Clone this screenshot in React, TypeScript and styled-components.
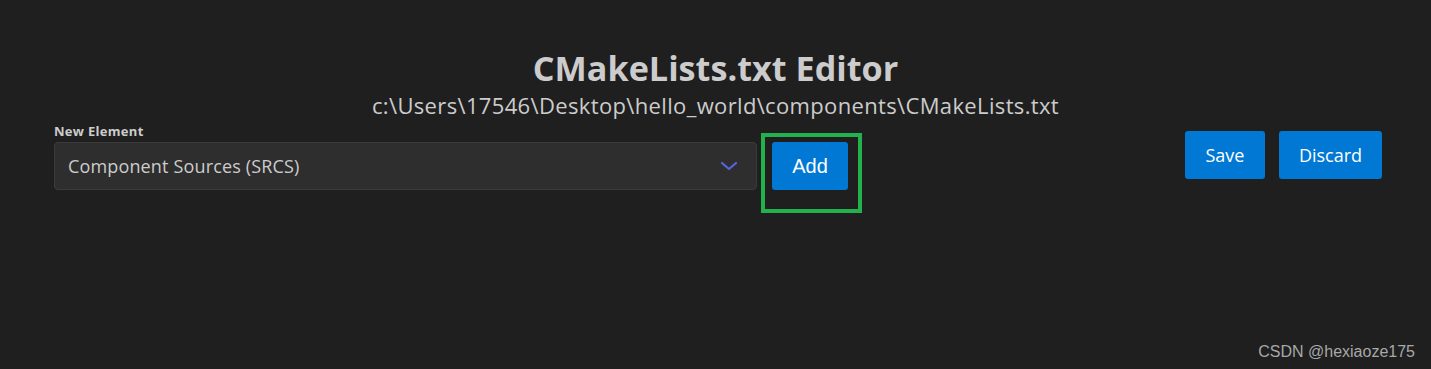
import React from "react";
import styled, { createGlobalStyle } from "styled-components";

const GlobalStyle = createGlobalStyle`
  html, body {
    margin: 0;
    padding: 0;
    background: #1f1f1f;
  }
  body {
    font-family: "Open Sans", "Noto Sans", sans-serif;
  }
`;

const Page = styled.div`
  position: relative;
  min-height: 100vh;
  box-sizing: border-box;
  background: #1f1f1f;
  color: #cccccc;
  padding-top: 46px;
`;

const Header = styled.header`
  text-align: center;
`;

const Title = styled.h1`
  margin: 0;
  font-size: 34.2px;
  line-height: 44px;
  font-weight: 700;
  color: #cccccc;
`;

const FilePath = styled.div`
  font-size: 22px;
  line-height: 28px;
  margin-top: 1px;
  color: #cccccc;
  letter-spacing: 0.35px;
`;

const Toolbar = styled.div`
  display: flex;
  justify-content: space-between;
  align-items: flex-start;
  padding: 0 49px 0 54px;
  margin-top: 3px;
`;

const LeftGroup = styled.div`
  display: flex;
  align-items: flex-end;
  gap: 15px;
`;

const Field = styled.div`
  display: flex;
  flex-direction: column;
`;

const Label = styled.label`
  font-size: 13px;
  line-height: 18px;
  font-weight: 700;
  color: #cccccc;
  letter-spacing: 0.3px;
  margin-bottom: 2px;
`;

const Select = styled.div`
  width: 703px;
  height: 48px;
  box-sizing: border-box;
  display: flex;
  align-items: center;
  justify-content: space-between;
  padding: 0 18px 0 13px;
  background: #2e2e2e;
  border: 1px solid #3b3b3b;
  border-radius: 4px;
  font-size: 18px;
  color: #cccccc;
  letter-spacing: 0.15px;
`;

const Annotated = styled.div`
  position: relative;
  &::after {
    content: "";
    position: absolute;
    left: -11px;
    top: -9px;
    right: -14px;
    bottom: -23px;
    border: 4px solid #22b14c;
    pointer-events: none;
  }
`;

const Button = styled.button<{ $w: number; $arial?: boolean }>`
  width: ${(p) => p.$w}px;
  height: 48px;
  border: none;
  border-radius: 3px;
  background: #0078d4;
  color: #ffffff;
  font-family: ${(p) =>
    p.$arial ? '"Liberation Sans", Arial, sans-serif' : '"Open Sans", "Noto Sans", sans-serif'};
  font-size: ${(p) => (p.$arial ? 20 : 18)}px;
  cursor: pointer;
  padding: 0;
`;

const RightGroup = styled.div`
  display: flex;
  gap: 14px;
  margin-top: 9px;
`;

const Watermark = styled.div`
  position: absolute;
  right: 16px;
  bottom: 8px;
  font-family: "Liberation Sans", Arial, sans-serif;
  font-size: 16px;
  color: #a8a8a8;
`;

function Chevron() {
  return (
    <svg width="18" height="10" viewBox="0 0 18 10" fill="none">
      <path d="M2 2 L9 8 L16 2" stroke="#5865d8" strokeWidth="2.2" strokeLinecap="round" strokeLinejoin="round" />
    </svg>
  );
}

export default function App() {
  return (
    <>
      <GlobalStyle />
      <Page>
        <Header>
          <Title>CMakeLists.txt Editor</Title>
          <FilePath>c:\Users\17546\Desktop\hello_world\components\CMakeLists.txt</FilePath>
        </Header>
        <Toolbar>
          <LeftGroup>
            <Field>
              <Label>New Element</Label>
              <Select>
                <span>Component Sources (SRCS)</span>
                <Chevron />
              </Select>
            </Field>
            <Annotated>
              <Button $w={76} $arial>
                Add
              </Button>
            </Annotated>
          </LeftGroup>
          <RightGroup>
            <Button $w={80}>Save</Button>
            <Button $w={103}>Discard</Button>
          </RightGroup>
        </Toolbar>
        <Watermark>CSDN @hexiaoze175</Watermark>
      </Page>
    </>
  );
}
